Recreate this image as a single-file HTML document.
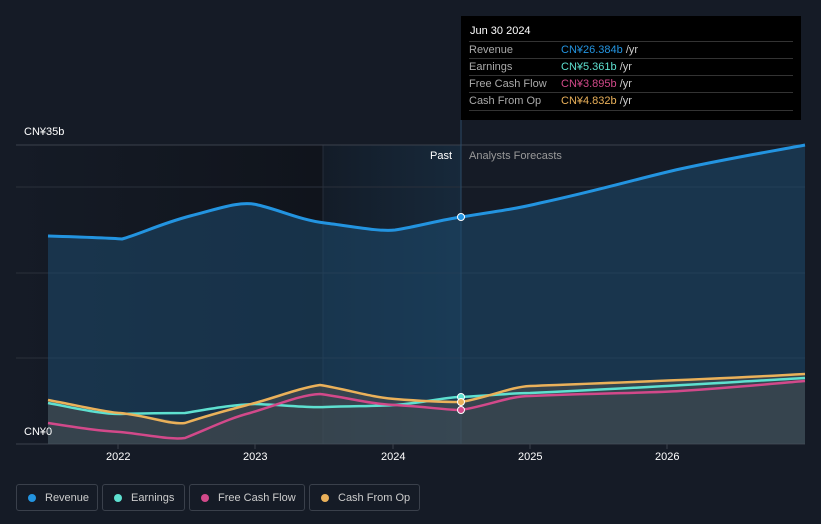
<!DOCTYPE html><html><head><style>
body{margin:0;width:821px;height:524px;background:#151b26;font-family:"Liberation Sans",sans-serif;overflow:hidden;position:relative}
.t{position:absolute;font-size:11px;color:#fff}
.tip{position:absolute;left:461px;top:16px;width:340px;height:104px;background:#000;}
.tip .h{position:absolute;left:9px;top:9px;font-size:11px;color:#fff}
.row{position:absolute;left:8px;width:324px;border-top:1px solid #333;height:17px;font-size:11px;line-height:17px;color:#aaa}
.row span{position:absolute;left:92px}
.row i{font-style:normal;color:#ccc}
.lg{position:absolute;top:484px;height:27px;border:1px solid #3a404b;border-radius:3px;font-size:11px;color:#ccc;line-height:26px;box-sizing:border-box}
.lg b{position:absolute;left:11px;top:9px;width:8px;height:8px;border-radius:50%}
.lg span{position:absolute;left:28px}
</style></head><body>
<svg width="821" height="524" style="position:absolute;left:0;top:0">
<defs>
<linearGradient id="pg" x1="0" x2="1"><stop offset="0" stop-color="#151b26"/><stop offset="1" stop-color="#10141c"/></linearGradient>
<linearGradient id="hg" x1="0" x2="1"><stop offset="0" stop-color="#131c28"/><stop offset="1" stop-color="#17293b"/></linearGradient>
</defs>
<rect x="16" y="145" width="307" height="299" fill="url(#pg)"/>
<rect x="323" y="145" width="138" height="299" fill="url(#hg)"/>
<line x1="323" y1="145" x2="323" y2="444" stroke="#252d3a"/>
<line x1="16" y1="145" x2="805" y2="145" stroke="#3b414c"/>
<line x1="16" y1="187" x2="805" y2="187" stroke="#2a303b"/>
<line x1="16" y1="273" x2="805" y2="273" stroke="#2a303b"/>
<line x1="16" y1="358" x2="805" y2="358" stroke="#2a303b"/>
<line x1="16" y1="444" x2="805" y2="444" stroke="#3b414c"/>
<line x1="461" y1="120" x2="461" y2="444" stroke="#2b4a66"/>
<path d="M48,236 C80,237 110,238 122,239 C140,234 160,224 190,216 C215,210 240,200 258,205 C280,210 300,220 325,223 C350,226 380,232 395,230 C420,226 440,220 461,217 C500,211 520,208 540,203 C600,190 640,178 680,169 C740,156 780,150 805,145 L805,444 L48,444Z" fill="#1e4a6e" fill-opacity="0.55"/>
<path d="M48,236 C80,237 110,238 122,239 C140,234 160,224 190,216 C215,210 240,200 258,205 C280,210 300,220 325,223 C350,226 380,232 395,230 C420,226 440,220 461,217 C500,211 520,208 540,203 C600,190 640,178 680,169 C740,156 780,150 805,145" fill="none" stroke="#2394e0" stroke-width="3"/>
<path d="M48,400 C80,406 110,413 120,413 C150,416 170,420 185,423 C215,413 240,407 255,403 C280,396 300,388 320,385 C350,390 370,397 395,399 C420,401 440,402 461,402 C490,397 510,387 530,386 C600,383 700,380 805,374 L805,444 L48,444Z" fill="#5a5650" fill-opacity="0.45"/>
<path d="M48,403 C80,409 100,414 120,414 C150,413 170,413 185,413 C210,409 230,405 255,404 C285,405 310,408 325,407 C360,406 380,406 395,405 C430,402 445,397 461,397 C500,395 510,393 530,393 C620,389 700,384 805,378" fill="none" stroke="#5ee0d0" stroke-width="2.5"/>
<path d="M48,423 C80,428 100,431 120,432 C150,435 170,440 185,438 C210,428 230,418 250,413 C280,404 300,395 320,394 C350,398 370,404 395,405 C430,407 445,410 461,410 C490,405 510,396 530,396 C600,393 650,393 680,391 C740,387 780,383 805,381" fill="none" stroke="#d2498a" stroke-width="2.5"/>
<path d="M48,400 C80,406 110,413 120,413 C150,416 170,425 185,423 C215,413 240,407 255,403 C280,396 300,388 320,385 C350,390 370,397 395,399 C420,401 440,402 461,402 C490,397 510,387 530,386 C600,383 700,380 805,374" fill="none" stroke="#eab15a" stroke-width="2.5"/>
<circle cx="461" cy="217" r="3.5" fill="#2394e0" stroke="#fff" stroke-width="1"/>
<circle cx="461" cy="397" r="3.5" fill="#5ee0d0" stroke="#fff" stroke-width="1"/>
<circle cx="461" cy="402" r="3.5" fill="#eab15a" stroke="#fff" stroke-width="1"/>
<circle cx="461" cy="410" r="3.5" fill="#d2498a" stroke="#fff" stroke-width="1"/>
<g stroke="#3b414c"><line x1="118" y1="444" x2="118" y2="449"/><line x1="255" y1="444" x2="255" y2="449"/><line x1="393" y1="444" x2="393" y2="449"/><line x1="530" y1="444" x2="530" y2="449"/><line x1="667" y1="444" x2="667" y2="449"/></g>
</svg>
<div class="t" style="left:24px;top:126px">CN¥35b</div>
<div class="t" style="left:24px;top:426px">CN¥0</div>
<div class="t" style="left:430px;top:150px">Past</div>
<div class="t" style="left:469px;top:150px;color:#999">Analysts Forecasts</div>
<div class="t" style="left:106px;top:451px">2022</div>
<div class="t" style="left:243px;top:451px">2023</div>
<div class="t" style="left:381px;top:451px">2024</div>
<div class="t" style="left:518px;top:451px">2025</div>
<div class="t" style="left:655px;top:451px">2026</div>
<div class="tip"><div class="h">Jun 30 2024</div>
<div class="row" style="top:25px">Revenue<span><b style="font-weight:normal;color:#2394e0">CN¥26.384b</b> <i>/yr</i></span></div>
<div class="row" style="top:42px">Earnings<span><b style="font-weight:normal;color:#5ee0d0">CN¥5.361b</b> <i>/yr</i></span></div>
<div class="row" style="top:59px">Free Cash Flow<span><b style="font-weight:normal;color:#d2498a">CN¥3.895b</b> <i>/yr</i></span></div>
<div class="row" style="top:76px;border-bottom:1px solid #333">Cash From Op<span><b style="font-weight:normal;color:#eab15a">CN¥4.832b</b> <i>/yr</i></span></div>
</div>
<div class="lg" style="left:16px;width:82px"><b style="background:#2394e0"></b><span>Revenue</span></div>
<div class="lg" style="left:102px;width:83px"><b style="background:#5ee0d0"></b><span>Earnings</span></div>
<div class="lg" style="left:189px;width:116px"><b style="background:#d2498a"></b><span>Free Cash Flow</span></div>
<div class="lg" style="left:309px;width:111px"><b style="background:#eab15a"></b><span>Cash From Op</span></div>
</body></html>
